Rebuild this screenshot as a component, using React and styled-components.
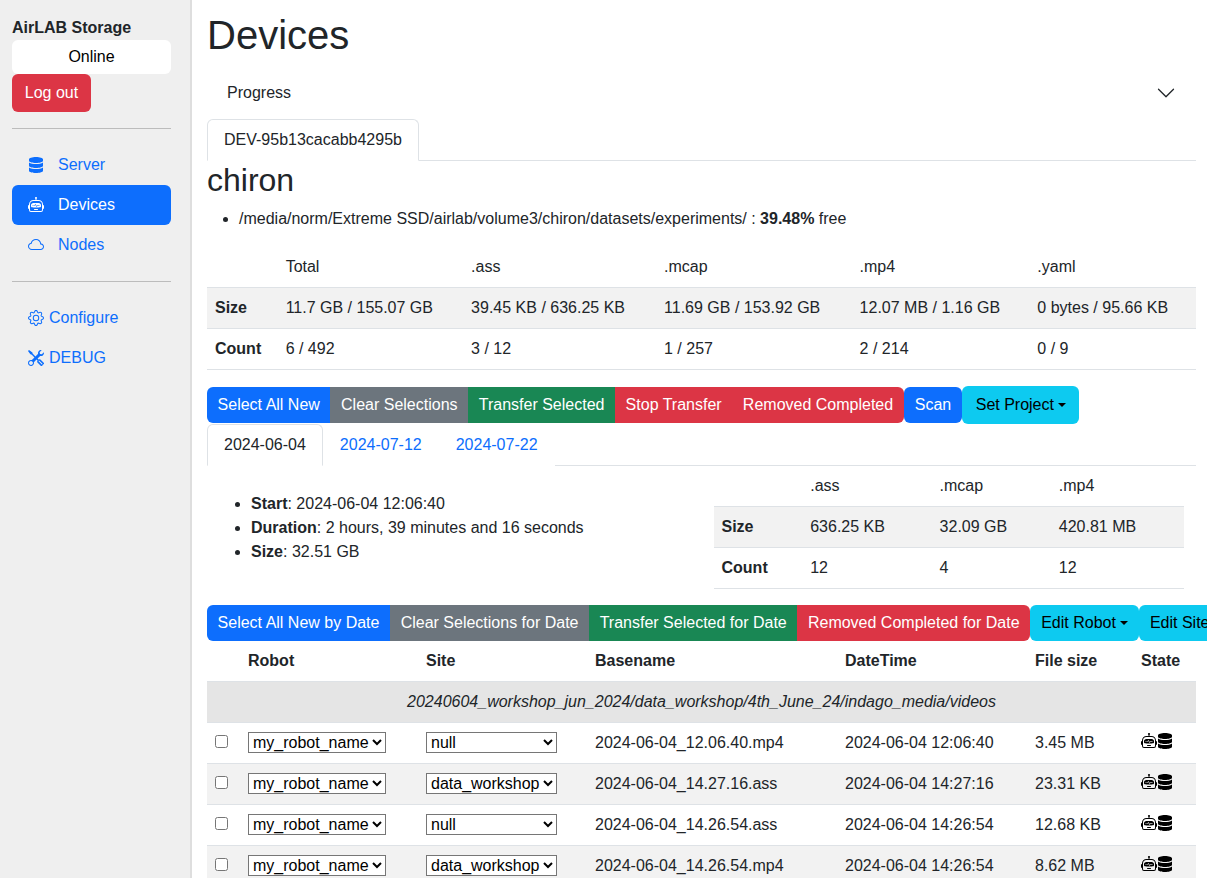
import React from "react";
import styled, { createGlobalStyle } from "styled-components";
import { BsRobot, BsCloud, BsGear, BsTools } from "react-icons/bs";
import { FaDatabase } from "react-icons/fa";

const Global = createGlobalStyle`
  html, body { margin: 0; padding: 0; height: 100%; overflow: hidden; }
  body {
    font-family: "Liberation Sans", Arial, sans-serif;
    font-size: 16px;
    line-height: 1.5;
    color: #212529;
    background: #fff;
  }
  * { box-sizing: border-box; }
`;

const Shell = styled.div`
  display: flex;
  height: 878px;
  overflow: hidden;
`;

const Sidebar = styled.aside`
  flex: 0 0 192px;
  background: #efefef;
  border-right: 2px solid #dedede;
  padding: 16px 19px 0 12px;
`;

const Brand = styled.div`
  font-weight: 700;
`;

const Status = styled.div`
  background: #fff;
  color: #000;
  height: 34px;
  line-height: 34px;
  text-align: center;
  border-radius: 6px;
`;

const Rule = styled.hr`
  border: 0;
  border-top: 1px solid #bcbcbc;
  margin: 16px 0;
`;

const NavList = styled.nav`
  display: flex;
  flex-direction: column;
`;

const NavLink = styled.a`
  display: flex;
  align-items: center;
  height: 40px;
  padding: 0 16px;
  border-radius: 6px;
  gap: ${(p) => (p.$tight ? "5px" : "14px")};
  color: ${(p) => (p.$active ? "#fff" : "#0d6efd")};
  background: ${(p) => (p.$active ? "#0d6efd" : "transparent")};
`;

const Main = styled.main`
  flex: 1;
  min-width: 0;
  padding: 11px 11px 0 15px;
`;

const Title = styled.h1`
  font-size: 40px;
  font-weight: 500;
  line-height: 1.2;
  margin: 0 0 10px;
`;

const Accordion = styled.div`
  display: flex;
  align-items: center;
  justify-content: space-between;
  height: 48px;
  padding: 0 20px;
  margin-bottom: 2px;
`;

const Tabs = styled.div`
  display: flex;
  border-bottom: 1px solid #dee2e6;
  height: 42px;
`;

const Tab = styled.a`
  display: block;
  height: 42px;
  padding: 8px 16px;
  color: ${(p) => (p.$active ? "#212529" : "#0d6efd")};
  background: #fff;
  border: 1px solid ${(p) => (p.$active ? "#dee2e6" : "transparent")};
  border-bottom-color: ${(p) => (p.$active ? "#fff" : "transparent")};
  border-radius: 6px 6px 0 0;
`;

const DeviceName = styled.h3`
  font-size: 32px;
  font-weight: 500;
  line-height: 38px;
  margin: 0 0 8px;
`;

const Bullets = styled.ul`
  margin: 0 0 16px;
  padding-left: 32px;
`;

const Table = styled.table`
  width: 100%;
  border-collapse: separate;
  border-spacing: 0;
  margin-bottom: 16px;
`;

const Row = styled.tr`
  background: ${(p) => (p.$striped ? "#f2f2f2" : "transparent")};
`;

const HeadCell = styled.th`
  padding: 8px;
  height: 41px;
  border-bottom: 1px solid #dee2e6;
  text-align: left;
  font-weight: 700;
`;

const Cell = styled.td`
  padding: 8px;
  height: 41px;
  border-bottom: 1px solid #dee2e6;
  font-weight: ${(p) => (p.$bold ? 700 : 400)};
`;

const GroupCell = styled(Cell)`
  text-align: center;
  font-style: italic;
  background: #e5e5e5;
`;

const Toolbar = styled.div`
  display: flex;
  align-items: center;
  height: 38px;
`;

const DateToolbar = styled(Toolbar)`
  width: 1100px;
  height: 36px;
`;

const tones = {
  primary: ["#0d6efd", "#fff"],
  secondary: ["#6c757d", "#fff"],
  success: ["#198754", "#fff"],
  danger: ["#dc3545", "#fff"],
  info: ["#0dcaf0", "#000"],
};

const Button = styled.button`
  flex: none;
  font: inherit;
  height: ${(p) => (p.$tall ? "38px" : "36px")};
  padding: 0 ${(p) => (p.$tall ? "13.5px" : p.$wide ? "11px" : "10.6px")};
  border: 0;
  background: ${(p) => tones[p.$tone][0]};
  color: ${(p) => tones[p.$tone][1]};
  border-radius: ${(p) => (p.$join === "left" ? "6px 0 0 6px" : p.$join === "mid" ? "0" : p.$join === "right" ? "0 6px 6px 0" : "6px")};
  &::after {
    ${(p) =>
      p.$caret
        ? `content: ""; display: inline-block; margin-left: 4px; vertical-align: 3px;
           border-top: 4.8px solid; border-left: 4.8px solid transparent; border-right: 4.8px solid transparent;`
        : ""}
  }
`;

const LogOut = styled(Button)`
  display: block;
  width: 79px;
  padding: 0;
`;

const DateColumns = styled.div`
  display: grid;
  grid-template-columns: 1fr 1fr;
  column-gap: 24px;
  padding: 0 12px;
`;

const DateFacts = styled.ul`
  margin: 26px 0 0;
  padding-left: 32px;
`;

const FileTable = styled(Table)`
  margin-bottom: 0;
  table-layout: fixed;
`;

const Col = styled.col`
  width: ${(p) => p.$w}px;
`;

const Picker = styled.select`
  font: inherit;
  color: #000;
  background: #fff;
  display: block;
  margin-bottom: 2px;
`;

const Tick = styled.input`
  display: block;
  margin: 0 0 3px;
  width: 13px;
  height: 13px;
`;

const StateIcons = styled.span`
  display: flex;
  color: #000;
  font-size: 16px;
  margin-bottom: 5px;
`;

const Chevron = () => (
  <svg width="20" height="20" viewBox="0 0 16 16" fill="#212529">
    <path fillRule="evenodd" d="M1.646 4.646a.5.5 0 0 1 .708 0L8 10.293l5.646-5.647a.5.5 0 0 1 .708.708l-6 6a.5.5 0 0 1-.708 0l-6-6a.5.5 0 0 1 0-.708z" />
  </svg>
);

const fileCols = [33, 178, 169, 250, 190, 106, 63];

const files = [
  ["null", "2024-06-04_12.06.40.mp4", "2024-06-04 12:06:40", "3.45 MB"],
  ["data_workshop", "2024-06-04_14.27.16.ass", "2024-06-04 14:27:16", "23.31 KB"],
  ["null", "2024-06-04_14.26.54.ass", "2024-06-04 14:26:54", "12.68 KB"],
  ["data_workshop", "2024-06-04_14.26.54.mp4", "2024-06-04 14:26:54", "8.62 MB"],
];

export default function App() {
  return (
    <>
      <Global />
      <Shell>
        <Sidebar>
          <Brand>AirLAB Storage</Brand>
          <Status>Online</Status>
          <LogOut $tall $tone="danger">Log out</LogOut>
          <Rule />
          <NavList>
            <NavLink><FaDatabase size={16} />Server</NavLink>
            <NavLink $active><BsRobot size={16} />Devices</NavLink>
            <NavLink><BsCloud size={16} />Nodes</NavLink>
          </NavList>
          <Rule />
          <NavList>
            <NavLink $tight><BsGear size={16} />Configure</NavLink>
            <NavLink $tight><BsTools size={16} />DEBUG</NavLink>
          </NavList>
        </Sidebar>
        <Main>
          <Title>Devices</Title>
          <Accordion>Progress<Chevron /></Accordion>
          <Tabs>
            <Tab $active>DEV-95b13cacabb4295b</Tab>
          </Tabs>
          <DeviceName>chiron</DeviceName>
          <Bullets>
            <li>/media/norm/Extreme SSD/airlab/volume3/chiron/datasets/experiments/ : <b>39.48%</b> free</li>
          </Bullets>
          <Table>
            <thead>
              <Row>
                <HeadCell></HeadCell>
                <Cell>Total</Cell>
                <Cell>.ass</Cell>
                <Cell>.mcap</Cell>
                <Cell>.mp4</Cell>
                <Cell>.yaml</Cell>
              </Row>
            </thead>
            <tbody>
              <Row $striped>
                <Cell $bold>Size</Cell>
                <Cell>11.7 GB / 155.07 GB</Cell>
                <Cell>39.45 KB / 636.25 KB</Cell>
                <Cell>11.69 GB / 153.92 GB</Cell>
                <Cell>12.07 MB / 1.16 GB</Cell>
                <Cell>0 bytes / 95.66 KB</Cell>
              </Row>
              <Row>
                <Cell $bold>Count</Cell>
                <Cell>6 / 492</Cell>
                <Cell>3 / 12</Cell>
                <Cell>1 / 257</Cell>
                <Cell>2 / 214</Cell>
                <Cell>0 / 9</Cell>
              </Row>
            </tbody>
          </Table>
          <Toolbar>
            <Button $tone="primary" $join="left">Select All New</Button>
            <Button $tone="secondary" $join="mid">Clear Selections</Button>
            <Button $tone="success" $join="mid">Transfer Selected</Button>
            <Button $tone="danger" $join="mid">Stop Transfer</Button>
            <Button $tone="danger" $join="right">Removed Completed</Button>
            <Button $wide $tone="primary">Scan</Button>
            <Button $tall $caret $tone="info">Set Project</Button>
          </Toolbar>
          <Tabs>
            <Tab $active>2024-06-04</Tab>
            <Tab>2024-07-12</Tab>
            <Tab>2024-07-22</Tab>
          </Tabs>
          <DateColumns>
            <DateFacts>
              <li><b>Start</b>: 2024-06-04 12:06:40</li>
              <li><b>Duration</b>: 2 hours, 39 minutes and 16 seconds</li>
              <li><b>Size</b>: 32.51 GB</li>
            </DateFacts>
            <Table>
              <thead>
                <Row>
                  <HeadCell></HeadCell>
                  <Cell>.ass</Cell>
                  <Cell>.mcap</Cell>
                  <Cell>.mp4</Cell>
                </Row>
              </thead>
              <tbody>
                <Row $striped>
                  <Cell $bold>Size</Cell>
                  <Cell>636.25 KB</Cell>
                  <Cell>32.09 GB</Cell>
                  <Cell>420.81 MB</Cell>
                </Row>
                <Row>
                  <Cell $bold>Count</Cell>
                  <Cell>12</Cell>
                  <Cell>4</Cell>
                  <Cell>12</Cell>
                </Row>
              </tbody>
            </Table>
          </DateColumns>
          <DateToolbar>
            <Button $tone="primary" $join="left">Select All New by Date</Button>
            <Button $tone="secondary" $join="mid">Clear Selections for Date</Button>
            <Button $tone="success" $join="mid">Transfer Selected for Date</Button>
            <Button $tone="danger" $join="right">Removed Completed for Date</Button>
            <Button $wide $caret $tone="info">Edit Robot</Button>
            <Button $wide $caret $tone="info">Edit Site</Button>
          </DateToolbar>
          <FileTable>
            <colgroup>
              {fileCols.map((w, i) => <Col key={i} $w={w} />)}
            </colgroup>
            <thead>
              <Row>
                <HeadCell></HeadCell>
                <HeadCell>Robot</HeadCell>
                <HeadCell>Site</HeadCell>
                <HeadCell>Basename</HeadCell>
                <HeadCell>DateTime</HeadCell>
                <HeadCell>File size</HeadCell>
                <HeadCell>State</HeadCell>
              </Row>
            </thead>
            <tbody>
              <Row>
                <GroupCell colSpan={7}>20240604_workshop_jun_2024/data_workshop/4th_June_24/indago_media/videos</GroupCell>
              </Row>
              {files.map((f, i) => (
                <Row key={f[1]} $striped={i % 2 === 1}>
                  <Cell><Tick type="checkbox" /></Cell>
                  <Cell>
                    <Picker defaultValue="my_robot_name">
                      <option>my_robot_name</option>
                    </Picker>
                  </Cell>
                  <Cell>
                    <Picker defaultValue={f[0]}>
                      <option>null</option>
                      <option>data_workshop</option>
                    </Picker>
                  </Cell>
                  <Cell>{f[1]}</Cell>
                  <Cell>{f[2]}</Cell>
                  <Cell>{f[3]}</Cell>
                  <Cell>
                    <StateIcons><BsRobot /><FaDatabase /></StateIcons>
                  </Cell>
                </Row>
              ))}
            </tbody>
          </FileTable>
        </Main>
      </Shell>
    </>
  );
}
